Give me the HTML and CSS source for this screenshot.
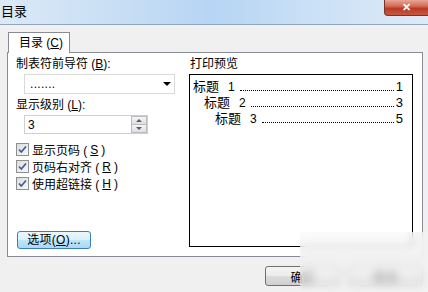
FILE: index.html
```html
<!DOCTYPE html>
<html lang="zh-CN">
<head>
  <meta charset="UTF-8" />
  <title>目录</title>
  <link rel="stylesheet" href="styles.css">
</head>
<body>
  <div class="window">
    <div class="titlebar">
      <span class="title">目录</span>
      <div class="close">✕</div>
    </div>
    <div class="client">
      <div class="tabs">
        <div class="tab">目录 (<u>C</u>)</div>
      </div>
      <div class="panel">
        <div class="col-left">
          <div class="label">制表符前导符 (<u>B</u>):</div>
          <div class="combo">
            <span class="leader">.......</span>
            <span class="arrow"></span>
          </div>
          <div class="label">显示级别 (<u>L</u>):</div>
          <div class="spin">
            <span class="spin-val">3</span>
            <div class="spin-btns">
              <div class="spin-btn"><span class="tri-up"></span></div>
              <div class="spin-btn"><span class="tri-down"></span></div>
            </div>
          </div>
          <div class="checks">
            <label class="check">
              <span class="box"><svg width="11" height="11" viewBox="0 0 11 11"><path d="M2 5.5 L4.3 8 L9 2.5" fill="none" stroke="#3f5f96" stroke-width="1.7"/></svg></span>
              显示页码 (<u>S</u>)
            </label>
            <label class="check">
              <span class="box"><svg width="11" height="11" viewBox="0 0 11 11"><path d="M2 5.5 L4.3 8 L9 2.5" fill="none" stroke="#3f5f96" stroke-width="1.7"/></svg></span>
              页码右对齐 (<u>R</u>)
            </label>
            <label class="check">
              <span class="box"><svg width="11" height="11" viewBox="0 0 11 11"><path d="M2 5.5 L4.3 8 L9 2.5" fill="none" stroke="#3f5f96" stroke-width="1.7"/></svg></span>
              使用超链接 (<u>H</u>)
            </label>
          </div>
          <button class="btn btn-options">选项(<u>O</u>)...</button>
        </div>
        <div class="col-right">
          <div class="label label-preview">打印预览</div>
          <div class="preview">
            <div class="toc-row">
              <span>标题</span><span class="num">1</span><span class="dots"></span><span>1</span>
            </div>
            <div class="toc-row lvl2">
              <span>标题</span><span class="num">2</span><span class="dots"></span><span>3</span>
            </div>
            <div class="toc-row lvl3">
              <span>标题</span><span class="num">3</span><span class="dots"></span><span>5</span>
            </div>
          </div>
        </div>
      </div>
      <div class="footer">
        <button class="btn btn-ok">确定</button>
        <button class="btn btn-ok">取消</button>
      </div>
    </div>
    <!-- 水印模糊 -->
    <div class="blur"></div>
  </div>
</body>
</html>
```

FILE: styles.css
```css
body {
  margin: 0;
  font-family: "Liberation Sans", "Noto Sans CJK SC", sans-serif;
  font-size: 12px;
  color: #000;
  background: #f0f0f0;
  overflow: hidden;
}
.window {
  position: relative;
  width: 428px;
  height: 292px;
  overflow: hidden;
}
.titlebar {
  height: 24px;
  border-bottom: 1px solid #8ea4bd;
  background: linear-gradient(90deg, #dbe9f7 0%, #c6ddf4 30%, #b7d5f4 50%, #cce1f6 75%, #dfeaf6 100%);
  display: flex;
  justify-content: space-between;
  align-items: flex-start;
}
.title {
  padding: 4px 0 0 1px;
  font-size: 13px;
  line-height: 16px;
}
.close {
  width: 43px;
  height: 15px;
  background: linear-gradient(#e9a797, #d0634d 45%, #b83b24 55%, #c9573f);
  border: 1px solid #7a3326;
  border-top: none;
  border-right: none;
  border-radius: 0 0 0 4px;
  color: #fff;
  font-size: 11px;
  font-weight: bold;
  line-height: 14px;
  text-align: center;
}
.client {
  padding: 7px 5px 0 7px;
}
.tabs {
  display: flex;
  padding-left: 1px;
  position: relative;
  z-index: 1;
  margin-bottom: -1px;
}
.tab {
  height: 21px;
  box-sizing: border-box;
  border: 1px solid #898c95;
  border-bottom: none;
  background: #fff;
  padding: 0 6px 0 10px;
  line-height: 20px;
}
.panel {
  width: 416px;
  height: 205px;
  box-sizing: border-box;
  border: 1px solid #898c95;
  background: #fff;
  display: flex;
}
.col-left {
  width: 180px;
  padding-left: 8px;
  box-sizing: border-box;
  display: flex;
  flex-direction: column;
  align-items: flex-start;
}
.label {
  margin-top: 4px;
  line-height: 14px;
}
.combo {
  margin: 3px 0 0 8px;
  width: 151px;
  height: 20px;
  box-sizing: border-box;
  border: 1px solid #d9d9d9;
  display: flex;
  align-items: center;
  justify-content: space-between;
  padding: 0 3px 0 5px;
}
.leader {
  letter-spacing: 0.3px;
  line-height: 14px;
}
.arrow {
  width: 0;
  height: 0;
  border-left: 4px solid transparent;
  border-right: 4px solid transparent;
  border-top: 4px solid #000;
}
.spin {
  margin: 3px 0 0 8px;
  width: 124px;
  height: 19px;
  box-sizing: border-box;
  border: 1px solid #cfcfcf;
  display: flex;
  align-items: center;
}
.spin-val {
  padding-left: 3px;
}
.spin-btns {
  margin-left: auto;
  width: 16px;
  height: 17px;
  display: flex;
  flex-direction: column;
}
.spin-btn {
  flex: 1;
  border: 1px solid #bcbcbc;
  background: linear-gradient(#f6f6f6, #dedede);
  display: flex;
  align-items: center;
  justify-content: center;
}
.spin-btn + .spin-btn {
  border-top: none;
}
.tri-up, .tri-down {
  width: 0;
  height: 0;
  border-left: 3px solid transparent;
  border-right: 3px solid transparent;
}
.tri-up {
  border-bottom: 3px solid #4c607f;
}
.tri-down {
  border-top: 3px solid #4c607f;
}
.checks {
  margin-top: 7px;
  display: flex;
  flex-direction: column;
}
.check {
  height: 17px;
  display: flex;
  align-items: center;
  gap: 3px;
}
.box {
  width: 11px;
  height: 11px;
  border: 1px solid #8e8f8f;
  background: linear-gradient(135deg, #dcdcdc, #fafafa);
  display: flex;
}
.btn {
  font-family: inherit;
  font-size: 12px;
  color: #000;
  padding: 0;
  border-radius: 3px;
}
.btn-options {
  margin: 39px 0 0 1px;
  width: 74px;
  height: 18px;
  border: 1px solid #3c7fb1;
  background: linear-gradient(#eaf6fd, #d9f0fc 50%, #bee6fd 50%, #a7d9f5);
  line-height: 15px;
  letter-spacing: 0.3px;
}
.col-right {
  flex: 1;
  padding-right: 8px;
  display: flex;
  flex-direction: column;
}
.label-preview {
  padding-left: 2px;
}
.preview {
  margin: 3px 0 0 1px;
  width: 224px;
  height: 173px;
  box-sizing: border-box;
  border: 1px solid #000;
  padding: 4px 9px 0 3px;
  font-size: 13px;
}
.toc-row {
  display: flex;
  align-items: baseline;
  line-height: 15px;
}
.toc-row.lvl2 {
  padding-left: 11px;
}
.toc-row.lvl3 {
  padding-left: 22px;
}
.num {
  margin-left: 9px;
  font-size: 12px;
}
.dots {
  flex: 1;
  margin: 0 2px 0 5px;
  border-bottom: 1px dotted #000;
}
.footer {
  margin-top: 9px;
  display: flex;
  justify-content: flex-end;
  gap: 8px;
}
.btn-ok {
  width: 75px;
  height: 20px;
  border: 1px solid #707070;
  background: linear-gradient(#f4f4f4, #ececec 50%, #dddddd 50%, #cfcfcf);
}
.blur {
  position: absolute;
  left: 300px;
  top: 232px;
  width: 128px;
  height: 60px;
  backdrop-filter: blur(4px);
  background: rgba(246, 246, 246, 0.55);
}
```
